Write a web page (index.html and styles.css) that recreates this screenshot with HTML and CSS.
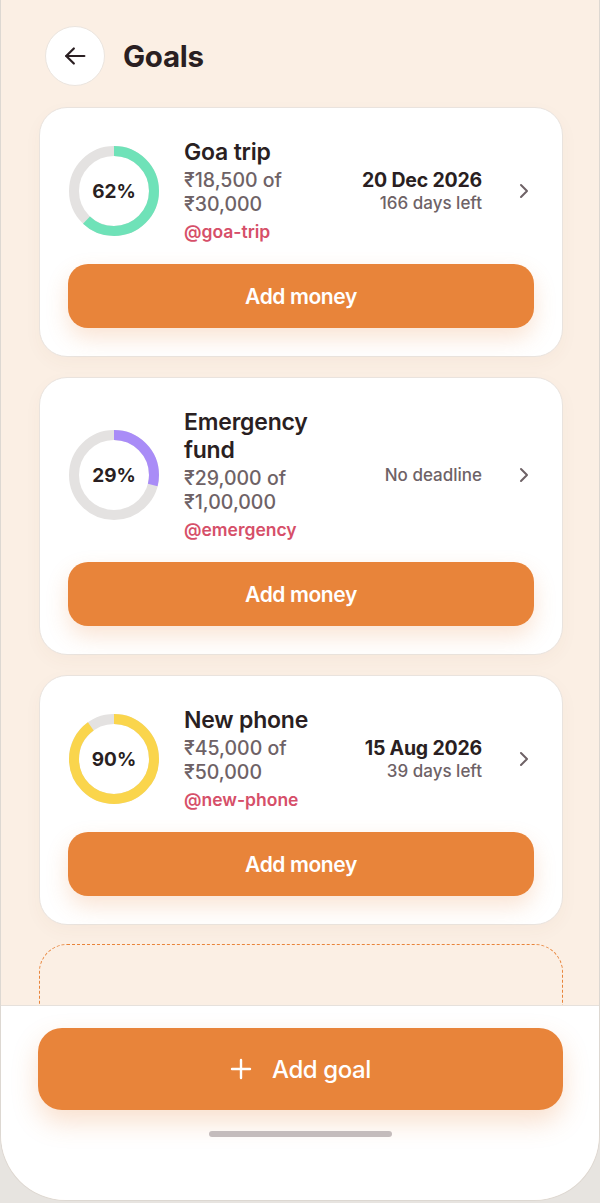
FILE: index.html
```html
<!DOCTYPE html>
<html lang="en">
<head>
<meta charset="utf-8">
<title>Goals</title>
<link rel="stylesheet" href="styles.css">
</head>
<body>
<div class="phone">
  <div class="scroll">
    <header class="header">
      <button class="back" aria-label="Back">
        <svg width="28" height="28" viewBox="0 0 24 24" fill="none" stroke="#2a1f22" stroke-width="1.9" stroke-linecap="round" stroke-linejoin="round"><path d="M20 12H4.5"/><path d="M11 5.5L4.5 12l6.5 6.5"/></svg>
      </button>
      <h1 class="title">Goals</h1>
    </header>

    <div class="cards">
      <section class="card">
        <div class="row">
          <div class="ring">
            <svg width="92" height="92" viewBox="0 0 92 92">
              <circle cx="46" cy="46" r="40" fill="none" stroke="#e4e2e1" stroke-width="10"/>
              <circle cx="46" cy="46" r="40" fill="none" stroke="#6fe2b8" stroke-width="10" stroke-dasharray="155.8 251.3" transform="rotate(-90 46 46)"/>
            </svg>
            <span class="pct">62%</span>
          </div>
          <div class="info">
            <div class="name">Goa trip</div>
            <div class="amount">₹18,500 of ₹30,000</div>
            <div class="handle">@goa-trip</div>
          </div>
          <div class="meta">
            <div class="date">20 Dec 2026</div>
            <div class="left">166 days left</div>
          </div>
          <svg class="chev" width="24" height="24" viewBox="0 0 24 24" fill="none" stroke="#6e6266" stroke-width="2" stroke-linecap="round" stroke-linejoin="round"><path d="M9 6l6 6-6 6"/></svg>
        </div>
        <button class="add">Add money</button>
      </section>

      <section class="card">
        <div class="row">
          <div class="ring">
            <svg width="92" height="92" viewBox="0 0 92 92">
              <circle cx="46" cy="46" r="40" fill="none" stroke="#e4e2e1" stroke-width="10"/>
              <circle cx="46" cy="46" r="40" fill="none" stroke="#a98cf7" stroke-width="10" stroke-dasharray="72.9 251.3" transform="rotate(-90 46 46)"/>
            </svg>
            <span class="pct">29%</span>
          </div>
          <div class="info">
            <div class="name">Emergency fund</div>
            <div class="amount">₹29,000 of ₹1,00,000</div>
            <div class="handle">@emergency</div>
          </div>
          <div class="meta">
            <div class="left">No deadline</div>
          </div>
          <svg class="chev" width="24" height="24" viewBox="0 0 24 24" fill="none" stroke="#6e6266" stroke-width="2" stroke-linecap="round" stroke-linejoin="round"><path d="M9 6l6 6-6 6"/></svg>
        </div>
        <button class="add">Add money</button>
      </section>

      <section class="card">
        <div class="row">
          <div class="ring">
            <svg width="92" height="92" viewBox="0 0 92 92">
              <circle cx="46" cy="46" r="40" fill="none" stroke="#e4e2e1" stroke-width="10"/>
              <circle cx="46" cy="46" r="40" fill="none" stroke="#fad54c" stroke-width="10" stroke-dasharray="226.2 251.3" transform="rotate(-90 46 46)"/>
            </svg>
            <span class="pct">90%</span>
          </div>
          <div class="info">
            <div class="name">New phone</div>
            <div class="amount">₹45,000 of ₹50,000</div>
            <div class="handle">@new-phone</div>
          </div>
          <div class="meta">
            <div class="date">15 Aug 2026</div>
            <div class="left">39 days left</div>
          </div>
          <svg class="chev" width="24" height="24" viewBox="0 0 24 24" fill="none" stroke="#6e6266" stroke-width="2" stroke-linecap="round" stroke-linejoin="round"><path d="M9 6l6 6-6 6"/></svg>
        </div>
        <button class="add">Add money</button>
      </section>

      <div class="dashed"></div>
    </div>
  </div>

  <footer class="sheet">
    <button class="goal">
      <svg width="22" height="22" viewBox="0 0 22 22" fill="none" stroke="#fff" stroke-width="2.4" stroke-linecap="round"><path d="M11 2v18"/><path d="M2 11h18"/></svg>
      <span>Add goal</span>
    </button>
    <div class="indicator"></div>
  </footer>
</div>
</body>
</html>
```

FILE: styles.css
```css
* { box-sizing: border-box; }
html, body { margin: 0; padding: 0; }
body {
  background: #e7e4e0;
  font-family: "Inter", "Noto Sans", sans-serif;
  color: #2a1f22;
}
.phone {
  width: 600px;
  height: 1201px;
  background: #fbefe4;
  border: 1px solid #ddd8d2;
  border-top: none;
  border-radius: 0 0 66px 66px;
  overflow: hidden;
  display: flex;
  flex-direction: column;
}
.scroll {
  flex: 1;
  overflow: hidden;
  padding: 0 36px 0 38px;
}
.header {
  display: flex;
  align-items: center;
  gap: 18px;
  padding: 26px 0 0 6px;
  height: 86px;
}
.back {
  width: 60px;
  height: 60px;
  border-radius: 50%;
  background: #fff;
  border: 1px solid #ebe5df;
  display: flex;
  align-items: center;
  justify-content: center;
  padding: 0;
}
.title {
  margin: 0;
  font-size: 29.5px;
  font-weight: 700;
  letter-spacing: -0.3px;
}
.cards {
  display: flex;
  flex-direction: column;
  gap: 20px;
  padding-top: 21px;
}
.card {
  background: #fff;
  border: 1px solid #e9e3de;
  border-radius: 28px;
  padding: 30px 28px 28px;
  display: flex;
  flex-direction: column;
  gap: 20px;
  box-shadow: 0 6px 18px rgba(120, 80, 40, 0.04);
}
.row {
  display: flex;
  align-items: center;
  gap: 24px;
}
.ring {
  position: relative;
  width: 92px;
  height: 92px;
  flex: 0 0 92px;
}
.ring svg { display: block; }
.pct {
  position: absolute;
  inset: 0;
  display: flex;
  align-items: center;
  justify-content: center;
  font-size: 19px;
  font-weight: 700;
}
.info {
  flex: 0 0 140px;
}
.name {
  font-size: 23px;
  font-weight: 600;
  line-height: 28px;
  margin-bottom: 2px;
  letter-spacing: -0.2px;
}
.amount {
  font-size: 19.5px;
  font-weight: 500;
  line-height: 24px;
  color: #6e6266;
}
.handle {
  margin-top: 4px;
  font-size: 17.5px;
  font-weight: 600;
  line-height: 24px;
  color: #d64f69;
}
.meta {
  flex: 1;
  text-align: right;
  padding-right: 6px;
}
.date {
  font-size: 19.5px;
  font-weight: 700;
  line-height: 24px;
  letter-spacing: -0.2px;
}
.left {
  font-size: 17px;
  font-weight: 500;
  line-height: 22px;
  color: #6e6266;
}
.chev { flex: 0 0 24px; margin-right: -2px; }
.add {
  height: 64px;
  border: none;
  border-radius: 20px;
  background: #e8843a;
  color: #fff;
  font-family: inherit;
  font-size: 21px;
  font-weight: 600;
  letter-spacing: -0.4px;
  box-shadow: 0 10px 22px rgba(232, 132, 58, 0.22);
}
.dashed {
  height: 140px;
  border: 1.5px dashed #e8843a;
  border-radius: 28px;
  margin-top: -1px;
}
.sheet {
  flex: 0 0 195px;
  background: #fff;
  border-top: 1px solid #e6e1dc;
  padding: 22px 36px 0 37px;
  display: flex;
  flex-direction: column;
  align-items: center;
  gap: 21px;
}
.goal {
  width: 100%;
  height: 82px;
  border: none;
  border-radius: 24px;
  background: #e8843a;
  color: #fff;
  font-family: inherit;
  font-size: 24px;
  font-weight: 500;
  letter-spacing: -0.4px;
  display: flex;
  align-items: center;
  justify-content: center;
  gap: 20px;
  box-shadow: 0 12px 26px rgba(232, 132, 58, 0.25);
}
.indicator {
  width: 183px;
  height: 6px;
  border-radius: 3px;
  background: #c4bcbc;
}
```
